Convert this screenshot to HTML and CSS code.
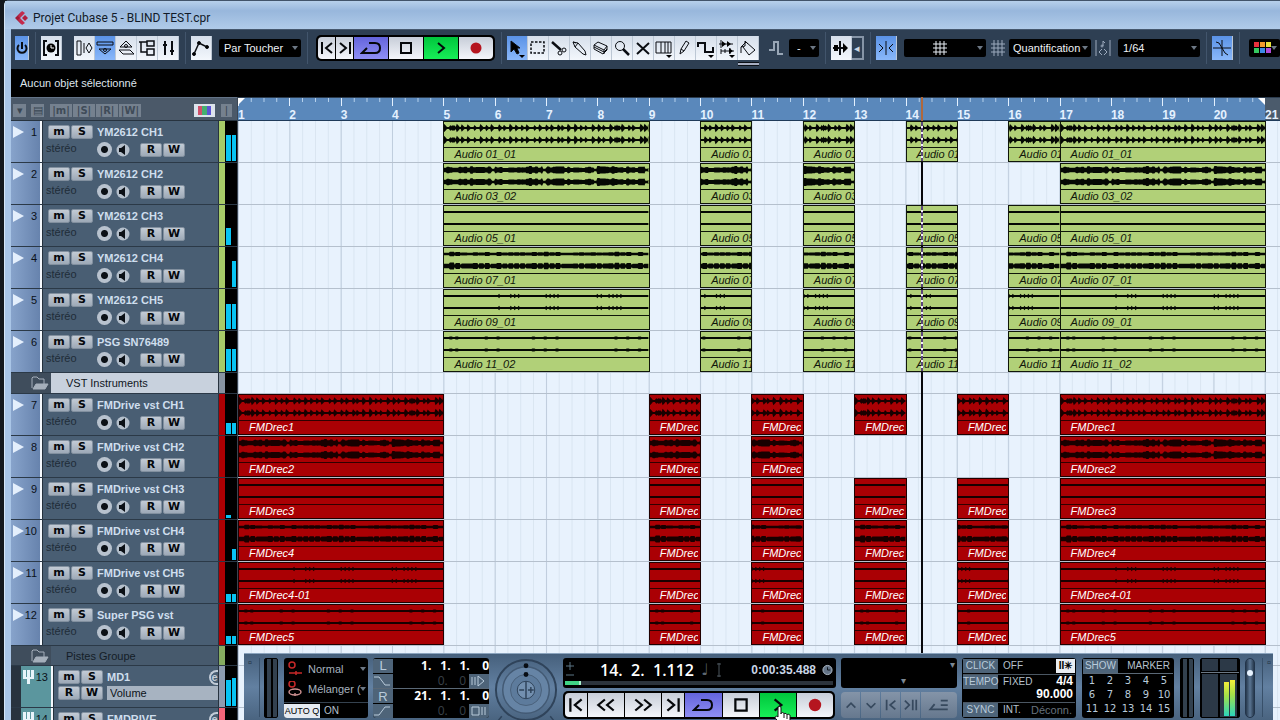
FILE: index.html
```html
<!DOCTYPE html>
<html lang="fr">
<head>
<meta charset="utf-8">
<title>Projet Cubase 5 - BLIND TEST.cpr</title>
<link rel="stylesheet" href="styles.css">
</head>
<body>
<svg class="defs" aria-hidden="true">
  <symbol id="i-start" viewBox="0 0 16 16"><path d="M3 2v12M13 3L7 8l6 5"/></symbol>
  <symbol id="i-end" viewBox="0 0 16 16"><path d="M13 2v12M3 3l6 5-6 5"/></symbol>
  <symbol id="i-rew" viewBox="0 0 20 16"><path d="M9 3L3 8l6 5M17 3l-6 5 6 5"/></symbol>
  <symbol id="i-fwd" viewBox="0 0 20 16"><path d="M3 3l6 5-6 5M11 3l6 5-6 5"/></symbol>
  <symbol id="i-cycle" viewBox="0 0 22 16"><path d="M7 8l-5 5h13c3 0 5-2 5-5s-2-5-5-5H9"/></symbol>
  <symbol id="i-stop" viewBox="0 0 16 16"><path d="M3 3h10v10H3z"/></symbol>
  <symbol id="i-play" viewBox="0 0 16 16"><path d="M5 3l6 5-6 5"/></symbol>
  <symbol id="i-rec" viewBox="0 0 16 16"><circle cx="8" cy="8" r="5.500" fill="#b5151f" stroke="none"/></symbol>
  <symbol id="i-folder" viewBox="0 0 18 14"><path d="M1 12V2l1-1h4l2 2h5v5"/><path d="M2 13l3-5h12l-3 5z" fill="currentColor"/></symbol>
  <symbol id="i-speaker" viewBox="0 0 14 14"><circle cx="7" cy="7" r="6.500" fill="#b4bfcb" stroke="none"/><path d="M3 5h2l4-3v10L5 9H3z" fill="#0b1016" stroke="none"/></symbol>
</svg>
<div class="window">
  <header class="titlebar">
    <svg class="logo" viewBox="0 0 14 14"><path d="M7 1L1 7l6 6-1-6z" fill="#a01836"/><path d="M8 0l3 2-5 5-2-2zM8 14l3-2-5-5-2 2z" fill="#c42a4c"/><path d="M8 7l3-3 3 3-3 3z" fill="#b11f3e"/></svg>
    <h1>Projet Cubase 5 - BLIND TEST.cpr</h1>
  </header>

  <nav class="toolbar" aria-label="Barre d'outils">
    <button class="tb on power" aria-label="Activer"><svg viewBox="0 0 14 20"><path d="M7 4v7M4 7a4.500 4.500 0 1 0 6 0" stroke-width="2"/></svg></button>
    <i class="sep"></i>
    <button class="tb" aria-label="Compensation"><svg viewBox="0 0 20 20"><path d="M6 3H3v14h3M14 3h3v14h-3" stroke-width="2"/><circle cx="10" cy="10" r="4.500" fill="#000" stroke="none"/><path d="M10 7v3h3" stroke="#fff"/></svg></button>
    <div class="group views">
      <button class="tb" aria-label="Inspecteur"><svg viewBox="0 0 20 20"><path d="M3 3h4v14H3zM10 5v10M12 10l3-5 3 5-3 5z"/></svg></button>
      <button class="tb on" aria-label="Infos"><svg viewBox="0 0 20 20"><path d="M2 4h16v3H2zM4 11h12l-6 5z"/><circle cx="10" cy="12" r="1.500"/></svg></button>
      <button class="tb" aria-label="Vue d'ensemble"><svg viewBox="0 0 20 20"><path d="M4 9l6-6 6 6zM3 12h3M3 12l4 4h11l-4-4H6"/><circle cx="10" cy="8" r="1.500"/></svg></button>
      <button class="tb" aria-label="Pool"><svg viewBox="0 0 20 20"><path d="M2 4h8M4 4v10h6M10 3h7v5h-7zM10 11h7v6h-7z" stroke-width="1.500"/></svg></button>
      <button class="tb" aria-label="Mixeur"><svg viewBox="0 0 20 20"><path d="M7 3v14M14 3v14M5 7h4M12 13h4" stroke-width="2"/></svg></button>
    </div>
    <i class="sep"></i>
    <button class="tb" aria-label="Automation"><svg viewBox="0 0 20 20"><path d="M3 16L8 5l8 4" stroke-width="1.500"/><circle cx="3" cy="16" r="1.500" fill="#000"/><circle cx="8" cy="5" r="1.500" fill="#000"/><circle cx="16" cy="9" r="1.500" fill="#000"/></svg></button>
    <label class="pick wide"><select aria-label="Mode d'automation"><option>Par Toucher</option></select></label>
    <i class="sep"></i>
    <div class="transport-keys small">
      <button class="k1" aria-label="Début"><svg><use href="#i-start"/></svg></button>
      <button class="k1" aria-label="Fin"><svg><use href="#i-end"/></svg></button>
      <button class="k2 cycle" aria-label="Boucle"><svg><use href="#i-cycle"/></svg></button>
      <button class="k2" aria-label="Stop"><svg><use href="#i-stop"/></svg></button>
      <button class="k2 play" aria-label="Lecture"><svg><use href="#i-play"/></svg></button>
      <button class="k2" aria-label="Enregistrer"><svg><use href="#i-rec"/></svg></button>
    </div>
    <i class="sep"></i>
    <div class="group">
      <button class="tb on" aria-label="Sélection"><svg viewBox="0 0 20 20"><path d="M4 3v11l3-3 3 5 2-1-2-5h3z" fill="#000"/><path d="M12 17h6l-3 3z" fill="#000" stroke="none"/></svg></button>
      <button class="tb" aria-label="Intervalle"><svg viewBox="0 0 20 20"><path d="M3 4h13v11H3z" stroke-dasharray="2.500 1.500" stroke-width="1.500"/></svg></button>
      <button class="tb" aria-label="Ciseaux"><svg viewBox="0 0 20 20"><path d="M3 4l9 8" stroke-width="2.500"/><circle cx="11" cy="15" r="2"/><circle cx="15" cy="12" r="2"/></svg></button>
      <button class="tb" aria-label="Colle"><svg viewBox="0 0 20 20"><path d="M3 4l2 5 8 7 3 1-1-4-7-8zM3 4l3 1M5 9l3-4"/></svg></button>
      <button class="tb" aria-label="Gomme"><svg viewBox="0 0 20 20"><path d="M3 7l4-3 9 4-3 4zM3 7v4l9 5 4-4V8M3 9l10 5 3-3M13 12v4"/></svg></button>
      <button class="tb" aria-label="Zoom"><svg viewBox="0 0 20 20"><circle cx="8" cy="8" r="4.500"/><path d="M11 11l6 6" stroke-width="2.500"/></svg></button>
      <button class="tb" aria-label="Muet"><svg viewBox="0 0 20 20"><path d="M4 5l12 11M16 5L4 16" stroke-width="2"/></svg></button>
      <button class="tb" aria-label="Time warp"><svg viewBox="0 0 20 20"><path d="M2 4h15v11H2zM7 4v11M11 4v11M14 4v11"/><path d="M12 17h6l-3 3z" fill="#000" stroke="none"/></svg></button>
      <button class="tb" aria-label="Crayon"><svg viewBox="0 0 20 20"><path d="M5 16l1-5 5-8 3 2-5 8zM6 11l3 2"/></svg></button>
      <button class="tb" aria-label="Ligne"><svg viewBox="0 0 20 20"><path d="M2 9V5h7v9h8V9" stroke-width="2"/><path d="M12 17h6l-3 3z" fill="#000" stroke="none"/></svg></button>
      <button class="tb" aria-label="Écoute"><svg viewBox="0 0 20 20"><path d="M4 2v8M2 6h14M4 13h13M13 10v6M8 11v4M4 11v5"/><path d="M5 3l4 3-4 3zM12 10l4 3-4 3zM10 3l4 3-4 3z" fill="#000" stroke="none"/><path d="M12 17h6l-3 3z" fill="#000" stroke="none"/></svg></button>
      <button class="tb colour" aria-label="Couleur"><svg viewBox="0 0 20 20"><path d="M3 15V9l5-5 9 8-6 5-6-8M7 8V3l3 3M3 9l4-1"/></svg></button>
    </div>
    <svg class="plain step" viewBox="0 0 16 18"><path d="M1 11h5V3h4v12h5" stroke-width="2"/></svg>
    <label class="pick tiny"><select aria-label="Valeur"><option>-</option></select></label>
    <i class="sep"></i>
    <div class="group">
      <button class="tb" aria-label="Défilement automatique"><svg viewBox="0 0 20 20"><path d="M9 3v14M2 10h12" stroke-width="2"/><path d="M3 7h4v6H3zM12 5l5 5-5 5z" fill="#000" stroke="none"/></svg></button>
      <button class="fold" aria-label="Suspendre">◂</button>
    </div>
    <i class="sep"></i>
    <button class="tb on" aria-label="Calage"><svg viewBox="0 0 20 20"><path d="M10 3v14M3 6l4 4-4 4M17 6l-4 4 4 4"/></svg></button>
    <label class="pick wide"><select aria-label="Type de calage"><option></option></select><svg class="plain hash" viewBox="0 0 16 16"><path d="M1 4h14M1 8h14M1 12h14M4 1v14M8 1v14M12 1v14"/></svg></label>
    <svg class="plain dim" viewBox="0 0 16 16"><path d="M1 4h14M1 8h14M1 12h14M4 0v16M8 0v16M12 0v16"/></svg>
    <label class="pick wide snug"><select aria-label="Grille"><option>Quantification</option></select></label>
    <svg class="plain dim" viewBox="0 0 16 16"><path d="M1 0v16M15 0v16M8 6V1l2 2M7 9l-3 3 3 3M9 9l3 3-3 3"/><circle cx="7" cy="6" r="1"/></svg>
    <label class="pick wide"><select aria-label="Quantification"><option>1/64</option></select></label>
    <i class="sep"></i>
    <button class="tb on" aria-label="Passages par zéro"><svg viewBox="0 0 20 20"><path d="M1 10h18M10 2v16M4 4l3 1 3 5 3 5 3 2"/></svg></button>
    <i class="sep"></i>
    <label class="pick colours"><select aria-label="Couleurs"><option></option></select><svg class="plain swatches" viewBox="0 0 18 12"><g stroke="none"><path fill="#e8303c" d="M0 0h5v5H0z"/><path fill="#f39a2c" d="M6 0h5v5H6z"/><path fill="#e8e03c" d="M12 0h5v5h-5z"/><path fill="#35c860" d="M0 6h5v5H0z"/><path fill="#3c8ae8" d="M6 6h5v5H6z"/><path fill="#b04ad8" d="M12 6h5v5h-5z"/></g></svg></label>
  </nav>

  <p class="infoline">Aucun objet sélectionné</p>

  <main class="project">
    <section class="tracklist" aria-label="Liste des pistes">
      <div class="listhead">
        <button class="lh" aria-label="Menu">▾</button>
        <button class="lh" aria-label="Préréglages">▤</button>
        <div class="flags"><span>|m|</span><span>|S|</span><span>|R|</span><span>|W|</span></div>
        <button class="tint" aria-label="Couleurs des pistes"><i></i><i></i><i></i></button>
        <button class="lh end" aria-label="Diviser">|</button>
      </div>
      <div id="heads"></div>
    </section>
    <section class="arrange" aria-label="Arrangement">
      <div class="ruler" id="ruler"></div>
      <div class="lanes" id="lanes"></div>
      <div class="playhead"><i></i></div>
    </section>
  </main>

  <section class="panel" aria-label="Transport">
    <div class="grip"><i>▫</i></div>
    <div class="strip"></div>
    <div class="lcd modes">
      <div class="moderow"><svg class="mode-icon" viewBox="0 0 16 16"><circle cx="5" cy="4" r="3"/><path d="M2 12h13M9 10v4"/></svg><label class="pick"><select aria-label="Mode d'enregistrement"><option>Normal</option></select></label></div>
      <div class="moderow"><svg class="mode-icon" viewBox="0 0 16 16"><circle cx="5" cy="3" r="3"/><ellipse class="loop" cx="8" cy="11" rx="6" ry="3"/><path class="loop" d="M8 12v3"/></svg><label class="pick"><select aria-label="Mode de boucle"><option>Mélanger (</option></select></label></div>
      <div class="autoq"><button>AUTO Q</button><span>ON</span></div>
    </div>
    <div class="lcd locators">
      <div class="loc"><button>L</button><output><b>1.</b><b>1.</b><b>1.</b><b>0</b></output></div>
      <div class="loc punch"><button aria-label="Punch in"><svg viewBox="0 0 18 12"><path d="M1 2h5l6 8h5"/></svg></button><output><span>0.</span><span>0</span></output><button aria-label="Preroll"><svg viewBox="0 0 18 12"><path d="M3 2v8M6 2v8M9 1v10l6-5z"/></svg></button></div>
      <div class="loc second"><button>R</button><output><b>21.</b><b>1.</b><b>1.</b><b>0</b></output></div>
      <div class="loc punch"><button aria-label="Punch out"><svg viewBox="0 0 18 12"><path d="M1 10h5l6-8h5"/></svg></button><output><span>0.</span><span>0</span></output><button aria-label="Postroll"><svg viewBox="0 0 18 12"><path d="M3 2h7v8H3zM13 2v8M16 2v8"/></svg></button></div>
    </div>
    <svg class="jog" viewBox="0 0 66 66"><g fill="none" stroke="#2f435a" stroke-width="2"><circle cx="33" cy="33" r="31"/><circle cx="33" cy="33" r="24" stroke="#435a74" stroke-width="1.500" fill="#6684a5"/><circle cx="33" cy="33" r="16" stroke="#4a617b" stroke-width="1" fill="#5d7b9c"/><circle cx="33" cy="33" r="9" stroke-width="1" fill="#7390b0"/><path d="M33 24v18M26 33h5M35 33h6M38 30v6M8 60l-4 5M58 60l4 5" stroke-width="1.500"/></g><g stroke="none" fill="#080d14"><circle cx="33" cy="8" r="2.500"/><circle cx="33" cy="17" r="2.500"/></g></svg>
    <div class="centre">
      <div class="lcd clock">
        <div class="clockrow"><svg class="pm" viewBox="0 0 10 20"><path d="M1 6h8M5 2v8M1 15h8"/></svg><output class="bars"><b>14.</b><b>2.</b><b>1.112</b></output><span class="note">♩</span><svg class="ibar" viewBox="0 0 6 18"><path d="M3 2v14M1 3h4M1 15h4"/></svg><output class="time">0:00:35.488</output><svg class="dial" viewBox="0 0 12 12"><circle cx="6" cy="6" r="5" fill="#647487"/><path d="M6 3v3h3" stroke="#0a0f16" fill="none"/></svg></div>
        <progress max="100" value="6" aria-label="Position"></progress>
      </div>
      <div class="transport-keys large">
        <button class="k1" aria-label="Début"><svg><use href="#i-start"/></svg></button>
        <button class="k2" aria-label="Retour rapide"><svg><use href="#i-rew"/></svg></button>
        <button class="k2" aria-label="Avance rapide"><svg><use href="#i-fwd"/></svg></button>
        <button class="k1" aria-label="Fin"><svg><use href="#i-end"/></svg></button>
        <button class="k2 cycle" aria-label="Boucle"><svg><use href="#i-cycle"/></svg></button>
        <button class="k2" aria-label="Stop"><svg><use href="#i-stop"/></svg></button>
        <button class="k2 play" aria-label="Lecture"><svg><use href="#i-play"/></svg><svg class="hand" viewBox="0 0 18 18"><path d="M4 2c0-2 3-2 3 0v6c0-2 3-2 3 0 0-1 3-1 3 1 1-2 4 0 3 2v7H7L2 13c-2-2 0-4 2-2z" fill="#fff" stroke="#111" stroke-width="1"/><path d="M10 8v4M13 9v4" stroke="#111" stroke-width="1"/></svg></button>
        <button class="k2" aria-label="Enregistrer"><svg><use href="#i-rec"/></svg></button>
      </div>
    </div>
    <div class="nudge">
      <div class="lcd blank"><i>▾</i><i>▾</i></div>
      <div class="nudgekeys">
        <button aria-label="Haut"><svg viewBox="0 0 16 16"><path d="M3 11l5-5 5 5"/></svg></button>
        <button aria-label="Bas"><svg viewBox="0 0 16 16"><path d="M3 6l5 5 5-5"/></svg></button>
        <button aria-label="Précédent"><svg><use href="#i-start"/></svg></button>
        <button aria-label="Suivant"><svg viewBox="0 0 16 16"><path d="M1 3l5 5-5 5M10 2v12M14 2v12"/></svg></button>
        <button class="wide" aria-label="Liste"><svg viewBox="0 0 24 16"><path d="M7 7l-5 6h10M12 13h10M14 8h8M14 3h8"/></svg></button>
      </div>
    </div>
    <div class="lcd sync">
      <div><button>CLICK</button><span>OFF</span><em>II✳</em></div>
      <div class="tempo"><button>TEMPO</button><span>FIXED</span><output>4/4<br>90.000</output></div>
      <div class="last"><button>SYNC</button><span>INT.</span><s>Déconn.</s></div>
    </div>
    <div class="lcd markers">
      <div class="show"><button>SHOW</button><span>MARKER</span></div>
      <div class="nums" id="nums"></div>
    </div>
    <div class="strip"></div>
    <div class="levels"><i></i><i></i></div>
    <input class="fader" type="range" min="0" max="100" value="78" aria-label="Volume">
    <div class="grip right"><i>▫</i></div>
  </section>
</div>
<script src="app.js"></script>
</body>
</html>
```
FILE: styles.css
```css
* { box-sizing: border-box; }
body {
  margin: 0;
  height: 100vh;
  overflow: hidden;
  background: #14181d;
  font: 11px/14px "Liberation Sans", Arial, sans-serif;
  color: #e8eef5;
}
button, select, input { font: inherit; color: inherit; margin: 0; padding: 0; border: 0; border-radius: 0; }
p, h1 { margin: 0; font: inherit; }
i, em { font-style: normal; }
svg { fill: none; stroke: currentColor; display: block; }
.defs { position: absolute; width: 0; height: 0; }

.window {
  position: relative;
  height: 100%;
  margin-left: 4px;
  padding-left: 6px;
  display: flex;
  flex-direction: column;
  background: #a9c5e6;
  border-top: 1px solid #42546a;
  border-left: 1px solid #d4e5f6;
  border-top-left-radius: 5px;
}
.titlebar {
  height: 28px;
  flex: none;
  display: flex;
  align-items: center;
  gap: 5px;
  margin-left: -6px;
  padding: 5px 9px 0;
  background: linear-gradient(#b7d0eb, #98b7dc 35%, #b0cbe9);
}
.titlebar h1 { font: 12px/16px Roboto, "Open Sans", sans-serif; color: #111a28; }
.logo { width: 14px; height: 14px; stroke: none; }

/* toolbar */
.toolbar {
  height: 40px;
  flex: none;
  display: flex;
  align-items: center;
  padding: 0 0 4px 4px;
  background: #2e3f53;
  border-top: 1px solid #46586e;
  overflow: hidden;
}
.toolbar > * { flex: none; }
.sep { width: 1px; height: 32px; margin: 0 5px 0 6px; background: #42556c; }
.tb { width: 21px; height: 24px; background: linear-gradient(#d6dfeb, #f3f7fc); color: #0a0d12; border-right: 1px solid #bcc7d4; display: grid; place-items: center; }
.tb svg { width: 20px; height: 20px; }
.tb.on { background: linear-gradient(#5a92e6, #8ab8fa); }
.tb.power { width: 14px; }
.tb.power svg { width: 14px; }
.group { display: flex; }
.views { margin-left: 12px; }
.colour { box-shadow: 0 2px #2e3f53, 0 3px #0b1016, 0 5px #a7aec2, 0 6px #0b1016; }
.pick { position: relative; display: block; height: 18px; background: #000; border-radius: 2px; color: #eef2f6; }
.pick select { width: 100%; height: 100%; padding: 0 12px 0 5px; background: none; appearance: none; display: block; }
.pick::after { content: ""; position: absolute; right: 3px; top: 7px; border: 3px solid transparent; border-top: 4px solid #6c7784; border-bottom: 0; }
.wide { width: 82px; }
.toolbar .pick.wide { margin-left: 7px; }
.toolbar .pick.snug { margin-left: 3px; }
.pick.snug select { padding: 0 0 0 4px; }
.tiny { width: 30px; }
.tiny select { padding-left: 8px; }
.colours { width: 31px; margin-left: 4px; }
.plain { width: 16px; height: 16px; color: #e8eef5; }
.step { margin: 0 5px 0 9px; color: #98a6b6; height: 18px; }
.dim { margin-left: 4px; color: #9caabd; }
.hash, .swatches { position: absolute; left: 28px; top: 1px; pointer-events: none; }
.swatches { left: 5px; top: 3px; width: 18px; height: 12px; }
.fold { width: 12px; height: 24px; background: #2e3f53; border: 2px solid #8594a6; border-left: 0; color: #ccd6e2; line-height: 18px; }

.transport-keys { display: flex; background: #000; padding: 2px; border-radius: 5px; gap: 1px; }
.transport-keys.small { margin-left: 3px; }
.transport-keys button { position: relative; height: 22px; background: linear-gradient(#c7cdd8, #f4f6fb); color: #05070a; display: grid; place-items: center; }
.transport-keys svg { width: 16px; height: 16px; stroke-width: 2; }
.transport-keys .k1 { width: 17px; }
.transport-keys .k2 { width: 34px; }
.transport-keys .cycle { background: linear-gradient(#6464dc, #8f8ff4); }
.transport-keys .cycle svg { width: 22px; }
.transport-keys .play { background: linear-gradient(#00c63c, #17ee58); }
.transport-keys button:first-child { border-radius: 4px 0 0 4px; }
.transport-keys button:last-child { border-radius: 0 4px 4px 0; }

.infoline { height: 28px; flex: none; padding: 7px 9px; background: #000; color: #dfe5ec; }

/* track list */
.project { flex: 1; min-height: 0; display: flex; overflow: hidden; background: #3d4f62; }
.tracklist { width: 227px; flex: none; border-right: 1px solid #3b4653; }
.listhead { height: 24px; display: flex; align-items: center; padding: 2px 5px 0 2px; background: #4b5969; border-bottom: 1px solid #27333f; border-top: 1px solid #647488; }
.lh { width: 13px; height: 13px; background: #75818f; color: #3a4754; line-height: 12px; margin-right: 5px; }
.lh.end { margin: 0 0 0 6px; width: 11px; }
.flags { display: flex; gap: 1px; flex: 1; margin-left: 1px; }
.flags span { width: 22px; height: 13px; background: #75818f; color: #3f4b58; text-align: center; font: bold 10px/13px "DejaVu Sans", sans-serif; }
.tint { display: flex; width: 21px; height: 13px; padding: 2px 4px; background: #dce3ec; }
.tint i { flex: 1; background: #d0506a; }
.tint i:nth-child(2) { background: #44b070; }
.tint i:nth-child(3) { background: #5c54d4; }

.head { height: 42px; display: flex; background: #495e73; border-bottom: 1px solid #2b3947; }
.num { position: relative; width: 29px; padding: 4px 3px 0 0; text-align: right; color: #0b1119; background: linear-gradient(90deg, #87a3cb, #6783ad); }
.num::before { content: ""; position: absolute; left: 2px; top: 5px; border: 6px solid transparent; border-left: 11px solid #e4effc; border-right: 0; }
.edge { width: 3px; background: #f4f8fd; border-right: 1px solid #24303c; }
.body { flex: 1; min-width: 0; display: flex; flex-direction: column; gap: 5px; padding: 4px 0 0 5px; }
.row { display: flex; align-items: center; height: 13px; white-space: nowrap; }
.key { width: 22px; height: 14px; margin-right: 1px; background: linear-gradient(#c3cbd5, #9da9b7); border: 1px solid #82909f; border-radius: 2px; color: #05080c; font: bold 11px/10px "DejaVu Sans", sans-serif; flex: none; }
.name { margin-left: 3px; font-weight: bold; color: #cfdeee; }
.chan { width: 51px; color: #202c38; margin-left: -2px; padding-bottom: 3px; }
.arm { width: 15px; height: 15px; flex: none; border-radius: 50%; background: radial-gradient(circle, #0b1016 0 3px, #b8c2ce 4px); margin-right: 4px; }
.mon { width: 14px; height: 14px; flex: none; background: none; margin-right: 10px; }
.mon svg { width: 14px; height: 14px; }
.swatch { width: 7px; border-left: 1px solid #27333f; }
.meter { width: 12px; background: #000; display: flex; align-items: flex-end; gap: 1px; padding: 0 1px 1px; }
.meter i { flex: 1; background: #08c4f4; }
.head.green .swatch { background: #a7cb68; }
.head.red .swatch { background: #ad0003; }
.head.folder { height: 21px; background: #3f4d5c; }
.head.folder.last { height: 20px; }
.ficon { width: 39px; padding: 3px 0 0 20px; color: #a5afbb; }
.ficon svg { width: 18px; height: 14px; }
.folder .label { flex: 1; padding: 3px 0 0 15px; margin-left: 1px; background: #c8d1dd; color: #10161d; }
.folder.last .label { background: #475a6d; color: #141d27; }
.folder .swatch { background: #8793a1; }
.folder.last .swatch { background: #86ac60; }
.indent { width: 10px; background: #28333f; }
.group-track .num { width: 30px; background: #5b969e; }
.group-track .num::before { content: ""; left: 2px; top: 4px; width: 11px; height: 14px; border: 0;
  background: linear-gradient(#e8f4fa, #e8f4fa) 4px 0 / 3px 100% no-repeat, linear-gradient(#e8f4fa, #e8f4fa) 0 7px / 100% 2px no-repeat, linear-gradient(90deg, #e8f4fa 3px, transparent 3px 8px, #e8f4fa 8px) 0 0 / 100% 8px no-repeat; }
.group-track .body { gap: 2px; padding-left: 4px; }
.group-track .row { height: 14px; }
.group-track .edit { margin-left: auto; width: 9px; height: 15px; border: 2px solid #c2ccd8; border-right: 0; border-radius: 9px 0 0 9px; background: none; line-height: 9px; font-weight: bold; color: #c2ccd8; }
.group-track .param { flex: 1; min-width: 0; height: 14px; margin-left: 3px; padding-left: 3px; background: #a7b3c1; color: #0c1218; }
.group-track .swatch { background: #8e9cb0; }
.group-track.pink .swatch { background: #f46478; }

/* arrangement */
.arrange { position: relative; flex: 1; min-width: 0; }
.ruler { height: 24px; display: grid; grid-template-columns: repeat(20, 1fr) 15px; background: #5a88bb; border-top: 1px solid #2c3c4e; border-bottom: 1px solid #1f3a59; overflow: hidden; }
.ruler span { position: relative; padding: 10px 0 0; font: bold 12px/14px "Liberation Sans", sans-serif; color: #e4f1ff;
  background: linear-gradient(90deg, #e4f1ff 1px, transparent 1px) 0 0 / 100% 8px no-repeat, linear-gradient(90deg, #b4d0ec 1px, transparent 1px) 0 0 / 25% 4px repeat-x; }
.ruler span:first-child::before, .ruler span:last-child::before { content: ""; position: absolute; left: 0; top: 0; border-top: 7px solid #fff; border-right: 7px solid transparent; }
.ruler span:last-child { background: #4b5b6c; }
.ruler span:last-child::before { left: -7px; border-right: 0; border-left: 7px solid transparent; }
.lanes {
  background:
    linear-gradient(90deg, #bfcddd 1px, transparent 1px) 0 0 / calc((100% - 15px) / 20) 100%,
    linear-gradient(90deg, #d9e5f1 1px, transparent 1px) 0 0 / calc((100% - 15px) / 80) 100%,
    #e8f2fd;
}
.lane { height: 42px; display: grid; grid-template-columns: repeat(20, 1fr) 15px; border-bottom: 1px solid #b5c0cd; }
.lane.thin { height: 21px; }
.lane.thin.last { height: 20px; }
.clip { position: relative; grid-row: 1; height: 41px; margin-right: -1px; min-width: 0; overflow: hidden; border: 1px solid #10160a; background: #b1d078; color: #10160a; }
.clip svg { width: 100%; height: 26px; fill: #050804; stroke: none; border-bottom: 1px solid #10160a; }
.clip span { display: block; height: 13px; padding-left: 10px; overflow: hidden; font-style: italic; line-height: 13px; white-space: nowrap; }
.clip.red { background: #aa0004; border-color: #200000; color: #fff; }
.clip.red svg { fill: #180000; border-color: #300000; }
.clip.red span { margin-right: 2px; }
.clip.crossed { z-index: 1; }
.clip .cross { position: absolute; left: 29%; top: 0; width: 2px; height: 100%; background: repeating-linear-gradient(#5a4678 0 4px, #f4ecff 4px 6px); }
/* the cursor spans the ruler and every lane */
.playhead { position: absolute; inset: 0 15px 0 0; pointer-events: none; }
.playhead i { position: absolute; left: 66.5%; top: 0; bottom: 0; width: 2px; background: linear-gradient(#b0683c 24px, #08080c 24px); }

/* transport panel floating over the project */
.panel {
  position: absolute;
  left: 239px;
  right: 7px;
  bottom: 0;
  height: 67px;
  display: flex;
  align-items: flex-start;
  padding: 4px 0 3px;
  background: linear-gradient(#46607c, #6280a1 50%, #4a6480);
  border-top: 1px solid #8ba4be;
  z-index: 3;
}
.panel > * { flex: none; }
.grip { width: 16px; height: 59px; margin-right: 4px; border-right: 1px solid #38506a; color: #1f3042; padding-left: 4px; line-height: 9px; }
.grip.right { margin: 0 0 0 7px; border-right: 0; border-left: 1px solid #38506a; }
.strip { width: 14px; height: 60px; background: linear-gradient(90deg, #000 2px, #33414f 2px 6px, #000 6px 8px, #33414f 8px 12px, #000 12px); border: 1px solid #000; border-radius: 2px; margin-right: 6px; }
.lcd { background: #000; border-radius: 3px; color: #b6c1cd; overflow: hidden; }
.lcd button { background: #4e6479; color: #b9cbdb; }
.modes { width: 84px; height: 60px; margin-right: 5px; }
.moderow { display: flex; align-items: center; height: 20px; padding: 2px 2px 0 3px; }
.mode-icon { width: 16px; height: 16px; color: #c62828; stroke-width: 1.5; flex: none; }
.mode-icon .loop { stroke: #c98d8d; }
.modes .pick { flex: 1; min-width: 0; background: none; color: #a7b2bf; }
.modes .pick select { padding: 0 0 0 5px; }
.modes .pick::after { right: 0; }
.autoq { display: flex; height: 16px; margin-top: 4px; align-items: center; border-top: 1px solid #35424f; font: 10px/12px "Liberation Sans", sans-serif; }
.autoq button { width: 36px; height: 14px; background: #e6ebf1; color: #000; margin-right: 4px; white-space: nowrap; font-size: 9px; }
.locators { width: 116px; height: 60px; margin-right: 4px; }
.loc { display: flex; height: 15px; align-items: center; }
.loc button { width: 20px; height: 14px; font-size: 13px; line-height: 13px; }
.loc svg { width: 18px; height: 12px; }
.loc output { flex: 1; display: grid; grid-template-columns: 2fr 1fr 1fr 1fr; text-align: right; font: 12px/14px "Open Sans", sans-serif; color: #fff; }
.loc b { font-weight: 700; }
.loc.second { border-top: 1px solid #5a6876; }
.punch output { grid-template-columns: 3fr 1fr; color: #3a4148; padding-right: 3px; }
.jog { width: 66px; height: 64px; margin-right: 4px; }
.centre { width: 273px; margin-right: 5px; }
.clock { height: 30px; padding: 1px 3px 0 2px; }
.clockrow { display: flex; align-items: center; height: 22px; }
.pm { width: 10px; height: 20px; color: #5d7686; }
.bars { display: flex; justify-content: space-between; width: 94px; margin-left: 25px; font: 16px/20px "Open Sans", sans-serif; color: #fff; }
.bars b { font-weight: 600; }
.note { margin-left: 7px; font: 16px/18px "DejaVu Sans", sans-serif; color: #5d6771; }
.ibar { width: 6px; height: 18px; margin-left: 7px; color: #4c565f; }
.time { margin-left: auto; font: bold 12px/14px "Liberation Sans", sans-serif; color: #c9d5e6; }
.dial { width: 11px; height: 12px; margin-left: 6px; }
progress { appearance: none; display: block; width: 100%; height: 4px; border: 0; background: #2c333b; }
progress::-webkit-progress-bar { background: #2c333b; }
progress::-webkit-progress-value { background: #40d485; border-right: 2px solid #a8f0cc; }
.large { margin-top: 3px; width: 272px; }
.large button { height: 24px; }
.transport-keys.large .k2 { flex: 37; }
.transport-keys.large .k1 { flex: 20; width: auto; }
.large svg { height: 18px; width: 22px; }
.transport-keys .hand { position: absolute; left: 14px; top: 13px; width: 18px; height: 18px; z-index: 4; }
.nudge { width: 116px; margin-right: 5px; }
.blank { height: 30px; display: flex; justify-content: flex-end; gap: 44px; padding-right: 2px; color: #7b8793; font-size: 10px; }
.blank i:first-child { align-self: flex-end; }
.nudgekeys { display: flex; gap: 1px; height: 26px; margin-top: 4px; }
.nudgekeys button { flex: 19; height: 26px; background: linear-gradient(#8494a8, #66788e); color: #37495e; display: grid; place-items: center; }
.nudgekeys button:first-child { border-radius: 4px 0 0 4px; }
.nudgekeys .wide { flex: 36; width: auto; border-radius: 0 4px 4px 0; }
.nudgekeys svg { width: 14px; height: 14px; stroke-width: 2; }
.nudgekeys .wide svg { width: 24px; }
.sync { width: 114px; height: 60px; margin-right: 6px; padding: 1px; font: 10px/14px "Liberation Sans", sans-serif; }
.sync > div { display: flex; height: 15px; align-items: flex-start; }
.sync button { width: 35px; height: 14px; margin-right: 5px; }
.sync em { margin-left: auto; width: 19px; background: #e9edf2; color: #000; white-space: nowrap; text-align: center; font-weight: bold; }
.sync .tempo { height: 29px; border-top: 1px solid #4b5763; }
.sync .last { border-top: 1px solid #4b5763; margin-top: -1px; }
.tempo output { margin-left: auto; margin-right: 2px; text-align: right; color: #fff; font: bold 12px/13px "Liberation Sans", sans-serif; }
.sync s { margin-left: auto; padding-right: 3px; text-decoration: none; color: #66717d; font-size: 11px; }
.markers { width: 92px; height: 60px; margin-right: 6px; padding: 1px; font: 10px/14px "Liberation Sans", sans-serif; }
.show { display: flex; justify-content: space-between; padding-right: 3px; height: 15px; border-bottom: 1px solid #5a6876; }
.show button { width: 35px; height: 14px; }
.nums { display: grid; grid-template-columns: repeat(5, 1fr); }
.nums button { background: none; height: 14px; font: 10px/14px "DejaVu Sans", sans-serif; }
.levels { width: 40px; height: 60px; margin-right: 5px; display: flex; align-items: flex-end; justify-content: flex-end; gap: 1px; padding: 0 4px 1px 0; border: 1px solid #000; border-radius: 2px;
  background: linear-gradient(transparent 12px, #000 12px 13px, #6c7885 13px 14px, #000 14px 15px, transparent 15px), linear-gradient(90deg, #000 1px, #2c3947 1px 17px, #000 17px 19px, #2c3947 19px 36px, #000 36px); }
.levels i { width: 5px; height: 34px; background: linear-gradient(#f4ee3a, #a4e048 40%, #2cd4bc); }
.levels i:last-child { height: 36px; }
.fader { writing-mode: vertical-lr; direction: rtl; appearance: none; width: 10px; height: 60px; background: linear-gradient(90deg, #26384c, #5a7593, #26384c); border: 1px solid #22344a; border-radius: 5px; }
.fader::-webkit-slider-thumb { appearance: none; width: 6px; height: 6px; border-radius: 50%; background: #e8f3ff; }
```
FILE: app.js
```js
const svgNS = 'http://www.w3.org/2000/svg';
const BAR = 52;

// clip start/end bars for each track family
const full = { green: [[5, 9], [10, 11], [12, 13], [14, 15], [16, 17], [17, 21]], red: [[1, 5], [9, 10], [11, 12], [13, 14], [15, 16], [17, 21]] };
// [number, name, colour, clip label, waveform kind, meter levels]
const rows = [
  [1, 'YM2612 CH1', 'green', 'Audio 01_01', 'hits', [26, 26]],
  [2, 'YM2612 CH2', 'green', 'Audio 03_02', 'dense', []],
  [3, 'YM2612 CH3', 'green', 'Audio 05_01', 'flat', [17, 0]],
  [4, 'YM2612 CH4', 'green', 'Audio 07_01', 'bass', [0, 26]],
  [5, 'YM2612 CH5', 'green', 'Audio 09_01', 'sparse', [25, 25]],
  [6, 'PSG SN76489', 'green', 'Audio 11_02', 'noise', [22, 22]],
  'VST Instruments',
  [7, 'FMDrive vst CH1', 'red', 'FMDrec1', 'hits', [11, 11]],
  [8, 'FMDrive vst CH2', 'red', 'FMDrec2', 'dense', []],
  [9, 'FMDrive vst CH3', 'red', 'FMDrec3', 'flat', [3, 0]],
  [10, 'FMDrive vst CH4', 'red', 'FMDrec4', 'bass', [0, 11]],
  [11, 'FMDrive vst CH5', 'red', 'FMDrec4-01', 'sparse', [8, 8]],
  [12, 'Super PSG vst', 'red', 'FMDrec5', 'noise', [8, 8]],
];

const rand = n => { const v = Math.sin(n * 127.1 + 31.7) * 43758.5453; return v - Math.floor(v); };

// half height of the waveform at one column
function level(kind, x, side) {
  const slot = Math.floor(x / 6), phase = x % 6, r = rand(slot);
  if (kind === 'hits') {
    const hit = Math.floor(r * 3);
    const decay = phase - hit;
    if (r > 0.88) return 1.5 + 2 * rand(x);
    return decay < 0 || decay > 2 ? 1 : (3 + 1.5 * rand(slot + 90)) - decay;
  }
  if (kind === 'dense') return x % 52 > 48 ? 1.2 : 2 + 2.2 * rand(Math.floor(x / 3)) * (rand(Math.floor(x / 16)) > 0.3 ? 1 : 0.6);
  if (kind === 'bass') return phase === 5 && r > 0.3 ? 1.2 : (side ? 2.2 + 1.2 * r : 1.2 + 1.1 * r);
  if (kind === 'sparse') return rand(Math.floor(x / 26) + 3) > 0.4 && x % 4 === 0 && r > 0.35 ? 2.2 : 0.9;
  if (kind === 'noise') return r > 0.6 && phase < 3 ? 1.4 : 0.9;
  return 1;
}

function wave(kind, from, to) {
  const width = (to - from) * BAR;
  const svg = document.createElementNS(svgNS, 'svg');
  svg.setAttribute('viewBox', `0 0 ${width} 25`);
  svg.setAttribute('preserveAspectRatio', 'none');
  [6, 18].forEach((mid, side) => {
    const up = [], down = [];
    for (let x = 0; x <= width; x++) {
      const a = level(kind, ((from - 1) * BAR + x) % (4 * BAR), side);
      up.push(`${x} ${mid - a}`);
      down.unshift(`${x} ${mid + a}`);
    }
    const path = document.createElementNS(svgNS, 'path');
    path.setAttribute('d', 'M' + up.concat(down).join('L') + 'Z');
    svg.append(path);
  });
  return svg;
}

const meter = v => `<div class="meter">${v.map(h => `<i style="height:${h}px"></i>`).join('')}</div>`;
const folder = (label, last) => `<div class="head folder ${last ? 'last' : ''}"><div class="ficon"><svg><use href="#i-folder"/></svg></div><div class="label">${label}</div><div class="swatch"></div>${meter([])}</div>`;
const groupTrack = (n, name, cls, v) => `<div class="head group-track ${cls}"><div class="indent"></div><div class="num">${n}</div><div class="edge"></div><div class="body">
  <div class="row"><button class="key">m</button><button class="key">S</button><span class="name">${name}</span><button class="edit" aria-label="Éditer">e</button></div>
  <div class="row"><button class="key">R</button><button class="key">W</button><input class="param" value="Volume" aria-label="Paramètre"></div></div><div class="swatch"></div>${meter(v)}</div>`;

const heads = document.getElementById('heads');
const lanes = document.getElementById('lanes');
let html = '';
for (const row of rows) {
  const lane = document.createElement('div');
  lane.className = 'lane';
  lanes.append(lane);
  if (typeof row === 'string') { html += folder(row, false); lane.classList.add('thin'); continue; }
  const [n, name, colour, label, kind, levels] = row;
  html += `<div class="head ${colour}"><div class="num">${n}</div><div class="edge"></div><div class="body">
    <div class="row"><button class="key">m</button><button class="key">S</button><span class="name">${name}</span></div>
    <div class="row"><span class="chan">stéréo</span><button class="arm" aria-label="Armer"></button><button class="mon" aria-label="Monitoring"><svg><use href="#i-speaker"/></svg></button><button class="key">R</button><button class="key">W</button></div>
    </div><div class="swatch"></div>${meter(levels)}</div>`;
  for (const [from, to] of full[colour]) {
    if (kind === 'dense' && (colour === 'green' ? [14, 16] : [13, 15]).includes(from)) continue;
    const clip = document.createElement('div');
    clip.className = `clip ${colour}`;
    clip.style.gridColumn = `${from} / ${to}`;
    const text = document.createElement('span');
    text.textContent = label;
    clip.append(wave(kind, from, to), text);
    if (from === 14) {
      const cross = document.createElement('i');
      cross.className = 'cross';
      clip.classList.add('crossed');
      clip.append(cross);
    }
    lane.append(clip);
  }
}
html += folder('Pistes Groupe', true) + groupTrack(13, 'MD1', '', [26, 28]) + groupTrack(14, 'FMDRIVE', 'pink', []);
heads.innerHTML = html;
lanes.insertAdjacentHTML('beforeend', '<div class="lane thin last"></div><div class="lane"></div><div class="lane"></div>');
document.getElementById('ruler').innerHTML = Array.from({ length: 21 }, (_, i) => `<span>${i + 1}</span>`).join('');
document.getElementById('nums').innerHTML = Array.from({ length: 15 }, (_, i) => `<button>${i + 1}</button>`).join('');
```
